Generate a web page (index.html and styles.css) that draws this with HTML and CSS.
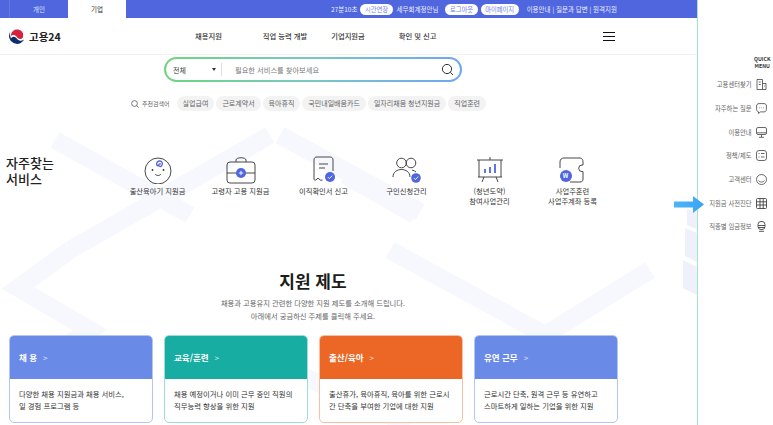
FILE: index.html
```html
<!DOCTYPE html>
<html lang="ko">
<head>
<meta charset="utf-8">
<title>고용24</title>
<link rel="stylesheet" href="styles.css">
</head>
<body>
<div class="page">
  <main class="main">
    <svg class="bg" width="697" height="425" viewBox="0 0 697 425" aria-hidden="true">
      <g fill="none" stroke="#f7f8fe" stroke-width="18">
        <path d="M55 140 L190 215 M70 250 L270 135"/>
        <path d="M280 135 L420 212"/>
        <path d="M345 175 L415 215"/>
        <path d="M70 250 L18 288 L90 330 L20 375"/>
        <path d="M390 250 L545 335 L650 270"/>
        <path d="M300 375 L410 425"/>
      </g>
      <path d="M687 209 L697 213 V229 L687 225Z M685 228 L697 233 V262 L685 256Z M683 260 L697 267 V295 L683 288Z" fill="#eef0fc"/>
    </svg>

    <div class="topbar">
      <div class="tabs">
        <a class="tab">개인</a>
        <a class="tab tab-on">기업</a>
      </div>
      <div class="util">
        <span>27분10초</span>
        <span class="pill">시간연장</span>
        <span class="name">세무회계정안님</span>
        <span class="pill pill-gap">로그아웃</span>
        <span class="pill">마이페이지</span>
        <span class="links">이용안내 | 질문과 답변 | 원격지원</span>
      </div>
    </div>

    <header class="header">
      <div class="logo">
        <svg width="16" height="16" viewBox="0 0 32 32">
          <circle cx="16" cy="16" r="16" fill="#fff"/>
          <path d="M3 6.500A16 16 0 1 0 31.500 20c-1.500 4-5 6-9 5.500-5-.6-6-4-9-6.500-3-2.500-8-1-9.500 2C2 14 1 10 3 6.500z" fill="#0b2f6b"/>
          <path d="M4 13C5 7 10 3 16 3c7 0 13 5 13 11.500 0 5-3.500 8-7.500 7.500-4-.5-5-3.500-7.500-6C11 13 6 13 4 16z" fill="#d4213d"/>
          <path d="M25 4.500c3 2.500 5.500 6 5.500 10 0 4-2 7-5 8.500 2-2 3-5 3-8.500 0-4-1.500-7.500-3.500-10z" fill="#fff"/>
        </svg>
        <span>고용24</span>
      </div>
      <nav class="nav">
        <a class="nav-a">채용지원</a>
        <a class="nav-b">직업 능력 개발</a>
        <a class="nav-c">기업지원금</a>
        <a class="nav-d">확인 및 신고</a>
      </nav>
      <div class="burger"><i></i><i></i><i></i></div>
    </header>

    <div class="search">
      <span class="sel">전체</span>
      <span class="caret"></span>
      <span class="div"></span>
      <span class="ph">필요한 서비스를 찾아보세요</span>
      <svg class="sicon" width="13" height="13" viewBox="0 0 13 13" fill="none" stroke="#333" stroke-width="1">
        <circle cx="6" cy="6" r="4.600"/><path d="M9.300 9.300L12 12"/>
      </svg>
    </div>

    <div class="rec">
      <svg width="8" height="8" viewBox="0 0 8 8" fill="none" stroke="#555" stroke-width=".8">
        <circle cx="3.500" cy="3.500" r="2.900"/><path d="M5.600 5.600L7.700 7.700"/>
      </svg>
      <span class="rec-l">추천검색어</span>
      <span class="chip">실업급여</span>
      <span class="chip">근로계약서</span>
      <span class="chip">육아휴직</span>
      <span class="chip">국민내일배움카드</span>
      <span class="chip">일자리채움 청년지원금</span>
      <span class="chip">직업훈련</span>
    </div>

    <section class="fav">
      <h2 class="fav-t">자주찾는<br>서비스</h2>
      <div class="fav-list">
        <div class="svc">
          <svg width="28" height="28" viewBox="0 0 28 28" fill="none" stroke="#333" stroke-width=".9">
            <circle cx="14" cy="15" r="13"/>
            <path d="M14 10c-2-1-2-4 1-5 3-.5 4.500 3 2.500 5-1.500 1.200-3.500 0-2.500-1.500.6-.8 1.500-.5 1.500 0" stroke="#4f66de" stroke-width="1.400"/>
            <circle cx="8.500" cy="14" r=".9" fill="#333" stroke="none"/><circle cx="19.500" cy="14" r=".9" fill="#333" stroke="none"/>
            <path d="M11 18c1.500 2 4.500 2 6 0"/>
          </svg>
          <p>출산육아기 지원금</p>
        </div>
        <div class="svc">
          <svg width="30" height="28" viewBox="0 0 30 28" fill="none" stroke="#333" stroke-width=".9">
            <rect x="1" y="6" width="28" height="21" rx="3"/>
            <path d="M10 6V4c0-3 10-3 10 0v2M1 17h28"/>
            <circle cx="15" cy="17" r="5" fill="#4f66de" stroke="none"/>
            <path d="M12.800 17h4.400M15 14.800v4.400" stroke="#fff"/>
          </svg>
          <p>고령자 고용 지원금</p>
        </div>
        <div class="svc">
          <svg width="24" height="28" viewBox="0 0 24 28" fill="none" stroke="#333" stroke-width=".9">
            <path d="M21 15V4c0-2-1-3-3-3H5C3 1 2 2 2 4v19c0 1 1 1.500 2 .8l2-1.600 2.500 2 2-.2"/>
            <path d="M7 8h9M7 12h6"/>
            <circle cx="18" cy="21" r="5" fill="#4f66de" stroke="none"/>
            <path d="M15.800 21l1.600 1.600 2.800-3" stroke="#fff"/>
          </svg>
          <p>이직확인서 신고</p>
        </div>
        <div class="svc">
          <svg width="29" height="28" viewBox="0 0 29 28" fill="none" stroke="#333" stroke-width=".9">
            <circle cx="9.500" cy="7" r="4.800"/><circle cx="19" cy="7" r="4.800"/>
            <path d="M1 21c0-10 17-10 17 0M20 14c1.500.3 3 1 4 2"/>
            <circle cx="24" cy="22" r="4.800" fill="#4f66de" stroke="none"/>
            <path d="M21.800 22l1.600 1.600 2.800-3" stroke="#fff"/>
          </svg>
          <p>구인신청관리</p>
        </div>
        <div class="svc">
          <svg width="28" height="28" viewBox="0 0 28 28" fill="none" stroke="#333" stroke-width=".9">
            <path d="M1 4h26M2 21h24M3 4v17M25 4v17M14 1v3M8 21l-2 5M20 21l2 5"/>
            <path d="M9 17v-4M14 17v-6M19 17V8" stroke="#4f66de" stroke-width="1.800"/>
          </svg>
          <p>(청년도약)<br>참여사업관리</p>
        </div>
        <div class="svc">
          <div class="wrap-w">
            <svg width="28" height="28" viewBox="0 0 28 28" fill="none" stroke="#333" stroke-width=".9">
              <path d="M1 12V6c0-3 2-4 4-4h16c2 0 3 2 3 4v3h-1a3.300 3.300 0 0 0 0 6.600h1V23c0 2-1 3-3 3h-10"/>
              <circle cx="7" cy="20" r="6" fill="#4f66de" stroke="none"/>
            </svg>
            <span class="w">W</span>
          </div>
          <p>사업주훈련<br>사업주계좌 등록</p>
        </div>
      </div>
    </section>

    <section class="sys">
      <h2 class="sys-t">지원 제도</h2>
      <p class="sys-s">채용과 고용유지 관련한 다양한 지원 제도를 소개해 드립니다.</p>
      <p class="sys-s">아래에서 궁금하신 주제를 클릭해 주세요.</p>
      <div class="cards">
        <article class="card c-blue"><h3>채 용<span>&gt;</span></h3><p>다양한 채용 지원금과 채용 서비스,<br>일 경험 프로그램 등</p></article>
        <article class="card c-teal"><h3>교육/훈련<span>&gt;</span></h3><p>채용 예정이거나 이미 근무 중인 직원의<br>직무능력 향상을 위한 지원</p></article>
        <article class="card c-orange"><h3>출산/육아<span>&gt;</span></h3><p>출산휴가, 육아휴직, 육아를 위한 근로시<br>간 단축을 부여한 기업에 대한 지원</p></article>
        <article class="card c-blue"><h3>유연 근무<span>&gt;</span></h3><p>근로시간 단축, 원격 근무 등 유연하고<br>스마트하게 일하는 기업을 위한 지원</p></article>
      </div>
    </section>
  </main>

  <aside class="side">
    <div class="qm">QUICK<br>MENU</div>
    <ul class="qlist">
      <li>고용센터찾기
        <svg width="11" height="11" viewBox="0 0 11 11" fill="none" stroke="#444" stroke-width=".8"><path d="M1 10.500V.5h5.500v10M6.500 4.500H10v6H1M2.800 3h2M2.800 5.500h2M8 7h.8"/></svg></li>
      <li>자주하는 질문
        <svg width="11" height="11" viewBox="0 0 11 11" fill="none" stroke="#444" stroke-width=".8"><path d="M3 .6h5c1.500 0 2.400 1 2.400 2.400v3.500c0 1.500-1 2.400-2.400 2.400H4.500L2.500 10.500V8.800C1.200 8.500.6 7.600.6 6.500V3C.6 1.600 1.500.6 3 .6z"/><path d="M3.400 4.800h.6M5.300 4.800h.6M7.200 4.800h.6"/></svg></li>
      <li>이용안내
        <svg width="11" height="11" viewBox="0 0 11 11" fill="none" stroke="#444" stroke-width=".8"><rect x=".5" y=".5" width="10" height="7" rx="1.500"/><path d="M5.500 7.500v2.500M3 10.300h5M.5 5.800h10"/></svg></li>
      <li>정책/제도
        <svg width="11" height="11" viewBox="0 0 11 11" fill="none" stroke="#444" stroke-width=".8"><rect x=".5" y=".5" width="10" height="10" rx="2.500"/><path d="M2.500 3.500h1M5 3.500h3.500M2.500 7h1M5 7h3.500"/></svg></li>
      <li>고객센터
        <svg width="11" height="11" viewBox="0 0 11 11" fill="none" stroke="#444" stroke-width=".8"><circle cx="5.500" cy="5.500" r="5"/><path d="M2.500 6.500c1.500 2 4.500 2 6 0"/></svg></li>
      <li>지원금 사전진단
        <svg width="11" height="11" viewBox="0 0 11 11" fill="none" stroke="#444" stroke-width=".9"><rect x=".5" y=".5" width="10" height="10" rx="1"/><path d="M.5 3.800h10M.5 7h10M4 .5v10M7.200 .5v10"/></svg></li>
      <li>직종별 임금정보
        <svg width="11" height="11" viewBox="0 0 11 11" fill="none" stroke="#444" stroke-width=".9"><rect x="2" y=".5" width="7" height="8" rx="3"/><path d="M2 4.500h7M2 6.500h7M3 10.300h5"/></svg></li>
    </ul>
  </aside>

  <svg class="arrow" width="30" height="17" viewBox="0 0 30 17" aria-hidden="true">
    <defs><linearGradient id="ag" x1="0" x2="1" y1="0" y2="0"><stop offset="0" stop-color="#4fb4f5"/><stop offset="1" stop-color="#37a4f7"/></linearGradient></defs>
    <path d="M0 5.500H19V0L30 8.500 19 17V11.500H0Z" fill="url(#ag)"/>
  </svg>
</div>
</body>
</html>
```
FILE: styles.css
```css
* { box-sizing: border-box; margin: 0; padding: 0; }
html, body { width: 773px; height: 425px; overflow: hidden; background: #fff; }
body { font-family: "Noto Sans CJK KR", "Noto Sans", sans-serif; color: #333; }
.page { position: relative; display: flex; width: 773px; height: 425px; overflow: hidden; }
.main { position: relative; width: 698px; height: 425px; border-right: 1px solid #a8e3c8; flex: none; }
.main > *:not(.bg) { position: relative; }
.bg { position: absolute; left: 0; top: 0; }

.topbar { display: flex; height: 18px; background: #4f66de; color: #eef; font-size: 6.500px; align-items: center; justify-content: space-between; }
.tabs { display: flex; height: 18px; margin-left: 9px; }
.tab { width: 59px; display: flex; align-items: center; justify-content: center; color: #dfe4fb; font-size: 6.500px; border-left: 1px solid #6478e4; }
.tab-on { background: #fff; color: #333; border-left: 0; width: 58px; }
.util { display: flex; align-items: center; gap: 3px; margin-right: 80px; white-space: nowrap; }
.pill { background: #fff; color: #6f82e4; border-radius: 7px; padding: 0 4.500px; height: 11px; line-height: 11px; font-size: 6.300px; }
.name { margin: 0 4px 0 1px; }
.links { margin-left: 5px; }

.header { height: 37px; display: flex; align-items: center; border-bottom: 1px solid #f0f0f0; padding-left: 9px; }
.logo { display: flex; align-items: center; gap: 4px; font-size: 10.500px; font-weight: 700; color: #222; width: 186px; flex: none; }
.nav { display: flex; font-size: 7.300px; font-weight: 500; color: #333; width: 408px; flex: none; }
.nav-a { margin-right: 41px; }
.nav-b { margin-right: 24px; }
.nav-c { margin-right: 34px; }
.burger { width: 12px; display: flex; flex-direction: column; gap: 3px; }
.burger i { display: block; height: 1px; background: #111; }

.search { display: flex; align-items: center; width: 298px; height: 25px; margin: 2px 0 0 164px; border: 2px solid transparent; border-radius: 12.500px; padding-left: 7px;
  background: linear-gradient(#fff, #fff) padding-box, linear-gradient(90deg, #6fd47e, #78c8c6 50%, #6ea6f5) border-box; }
.sel { font-size: 7px; color: #333; width: 39px; }
.caret { width: 0; height: 0; border: 2.200px solid transparent; border-top: 3px solid #333; border-bottom: 0; }
.div { width: 1px; height: 13px; background: #ddd; margin: 0 13px 0 5px; }
.ph { font-size: 7.250px; color: #777; width: 206px; }
.sicon { flex: none; }

.rec { display: flex; align-items: center; gap: 2px; margin: 14px 0 0 131px; height: 15px; }
.rec-l { font-size: 6px; color: #666; margin: 0 5px 0 1px; }
.chip { background: #f3f3f4; color: #666; border-radius: 8px; height: 15px; line-height: 15px; font-size: 7px; padding: 0 6px; white-space: nowrap; }

.fav { display: flex; margin-top: 42px; height: 65px; }
.fav-t { font-size: 13px; line-height: 16px; font-weight: 500; color: #222; margin: 2px 0 0 6px; width: 110px; flex: none; }
.fav-list { display: grid; grid-template-columns: repeat(6, 83px); margin-top: 2px; }
.svc { display: flex; flex-direction: column; align-items: center; gap: 3px; margin-top: 1px; }
.svc svg { flex: none; display: block; }
.svc p { font-size: 7.300px; line-height: 9.500px; color: #333; text-align: center; white-space: nowrap; }
.wrap-w { position: relative; width: 28px; height: 28px; }
.w { position: absolute; left: 1px; top: 14px; width: 12px; height: 12px; line-height: 12px; text-align: center; font-size: 6px; font-weight: 700; color: #fff; }

.sys { margin-top: 51px; }
.sys-t { font-size: 17px; line-height: 24px; font-weight: 700; color: #1c1c1c; text-align: center; width: 626px; }
.sys-s { font-size: 7.300px; line-height: 13px; color: #666; text-align: center; width: 626px; }
.sys-t + .sys-s { margin-top: 4px; }
.cards { display: grid; grid-template-columns: repeat(4, 144px); gap: 11px; margin: 12px 0 0 9px; }
.card { height: 88px; border-radius: 5px; border: 1px solid; overflow: hidden; background: #fff; }
.card h3 { height: 44px; margin: -1px -1px 0; padding-left: 10px; line-height: 44px; font-size: 8.500px; font-weight: 700; color: #fff; }
.card h3 span { font-weight: 400; margin-left: 6px; font-size: 8px; opacity: .85; }
.card p { padding: 9px 0 0 9px; font-size: 7.350px; line-height: 12px; color: #333; white-space: nowrap; }
.c-blue { border-color: #b4c5f5; } .c-blue h3 { background: #6a8ae8; }
.c-teal { border-color: #9edcd6; } .c-teal h3 { background: #17ada2; }
.c-orange { border-color: #f6c0a2; } .c-orange h3 { background: #ec6726; }

.side { flex: 1; padding: 55px 7px 0 0; }
.qm { font-size: 5.200px; line-height: 7px; font-weight: 700; color: #333; text-align: center; margin-left: 56px; margin-right: -4px; }
.qlist { list-style: none; margin-top: 4px; }
.qlist li { display: flex; align-items: center; justify-content: flex-end; gap: 4px; height: 23.700px; font-size: 6.300px; color: #666; white-space: nowrap; }
.qlist svg { flex: none; }

.arrow { position: absolute; left: 674px; top: 196px; }
```
